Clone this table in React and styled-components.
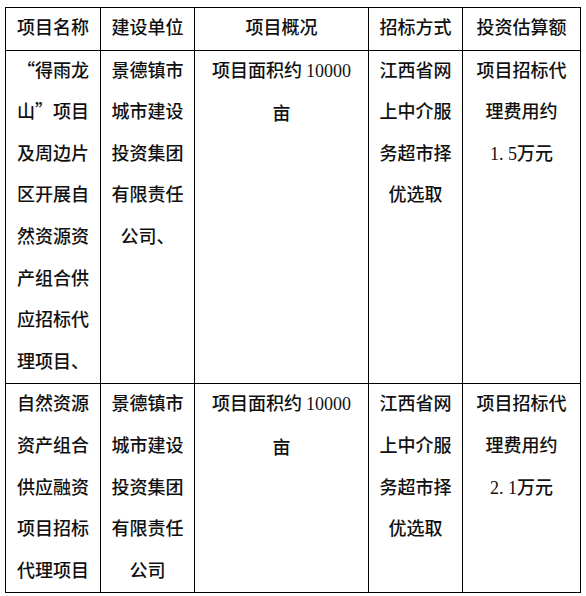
import { createGlobalStyle } from 'styled-components';
import styled from 'styled-components';

const GlobalStyle = createGlobalStyle`
  html, body {
    margin: 0;
    padding: 0;
    background: #fff;
  }
  body {
    font-family: "Noto Sans CJK SC", sans-serif;
    color: #111;
  }
`;

const Page = styled.div`
  padding: 7px 5px 4px 5px;
`;

const Table = styled.table`
  width: 576px;
  border-collapse: collapse;
  table-layout: fixed;
`;

const HeadCell = styled.th`
  border: 1px solid #000;
  font-weight: 500;
  font-size: 18px;
  line-height: 41.6px;
  padding: 0 10px;
  text-align: center;
  white-space: nowrap;
`;

const Cell = styled.td`
  border: 1px solid #000;
  font-size: 18px;
  font-weight: 500;
  line-height: 41.6px;
  padding: 0 10px;
  text-align: center;
  vertical-align: top;
  word-break: break-all;
`;

// glyphs of the sans face sit a little low; lift the block of lines
const Lines = styled.div`
  margin: -2px 0 2px;
`;

const Num = styled.span`
  font-family: "Liberation Serif", "Times New Roman", serif;
`;

const columns = [95, 94, 174, 94, 118];

const headers = ['项目名称', '建设单位', '项目概况', '招标方式', '投资估算额'];

const rows = [
  {
    name: '“得雨龙山”项目及周边片区开展自然资源资产组合供应招标代理项目、',
    unit: '景德镇市城市建设投资集团有限责任公司、',
    area: '10000',
    method: '江西省网上中介服务超市择优选取',
    fee: '1. 5',
  },
  {
    name: '自然资源资产组合供应融资项目招标代理项目',
    unit: '景德镇市城市建设投资集团有限责任公司',
    area: '10000',
    method: '江西省网上中介服务超市择优选取',
    fee: '2. 1',
  },
];

export default function App() {
  return (
    <Page>
      <GlobalStyle />
      <Table>
        <colgroup>
          {columns.map((w, i) => (
            <col key={i} style={{ width: w }} />
          ))}
        </colgroup>
        <thead>
          <tr>
            {headers.map((h) => (
              <HeadCell key={h}>
                <Lines>{h}</Lines>
              </HeadCell>
            ))}
          </tr>
        </thead>
        <tbody>
          {rows.map((r, i) => (
            <tr key={i}>
              <Cell>
                <Lines>{r.name}</Lines>
              </Cell>
              <Cell>
                <Lines>{r.unit}</Lines>
              </Cell>
              <Cell>
                <Lines>
                  项目面积约 <Num>{r.area}</Num>亩
                </Lines>
              </Cell>
              <Cell>
                <Lines>{r.method}</Lines>
              </Cell>
              <Cell>
                <Lines>
                  项目招标代理费用约
                  <br />
                  <Num>{r.fee}</Num>万元
                </Lines>
              </Cell>
            </tr>
          ))}
        </tbody>
      </Table>
    </Page>
  );
}
